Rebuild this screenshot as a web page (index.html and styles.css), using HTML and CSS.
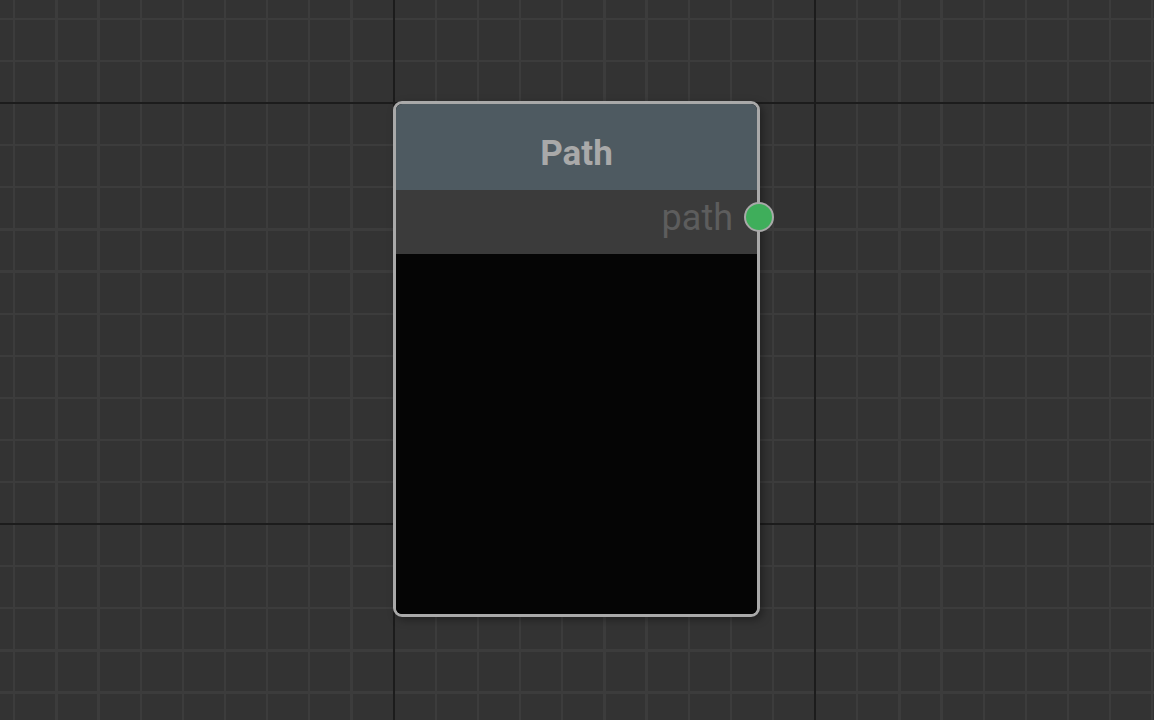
FILE: index.html
```html
<!DOCTYPE html>
<html lang="en">
<head>
<meta charset="utf-8">
<title>Path node</title>
<link rel="stylesheet" href="styles.css">
</head>
<body>
<div class="canvas">
  <div class="node">
    <div class="node-header">
      <span class="node-title">Path</span>
    </div>
    <div class="node-row">
      <span class="port-label">path</span>
      <span class="port"></span>
    </div>
    <div class="node-body"></div>
  </div>
</div>
</body>
</html>
```

FILE: styles.css
```css
html, body {
  margin: 0;
  padding: 0;
  width: 1154px;
  height: 720px;
  overflow: hidden;
  background: #333333;
}

.canvas {
  position: relative;
  width: 1154px;
  height: 720px;
  font-family: Roboto, "Noto Sans", "Liberation Sans", sans-serif;
  background-color: #333333;
  background-image:
    linear-gradient(90deg, transparent 0 393px, #1c1c1c 393px 395px, transparent 395px 814px, #1c1c1c 814px 816px, transparent 816px),
    linear-gradient(180deg, transparent 0 102px, #1c1c1c 102px 104px, transparent 104px 523px, #1c1c1c 523px 525px, transparent 525px),
    repeating-linear-gradient(90deg, #3c3c3c 13.15px, #3c3c3c 15.4px, transparent 15.4px, transparent 55.3px),
    repeating-linear-gradient(180deg, #3c3c3c 17.8px, #3c3c3c 20px, transparent 20px, transparent 59.9px);
}

.node {
  position: absolute;
  left: 393px;
  top: 101px;
  width: 367px;
  height: 516px;
  box-sizing: border-box;
  border: 3px solid #a9a9a9;
  border-radius: 9px;
  display: flex;
  flex-direction: column;
  box-shadow: 3px 3px 8px rgba(0, 0, 0, 0.35);
  background: #050505;
}

.node-header {
  height: 86px;
  flex: none;
  box-sizing: border-box;
  padding-top: 12px;
  background: #4e5a61;
  border-radius: 6px 6px 0 0;
  display: flex;
  align-items: center;
  justify-content: center;
}

.node-title {
  font-size: 35px;
  font-weight: 700;
  color: #a9a9a9;
  line-height: 1;
}

.node-row {
  position: relative;
  height: 64px;
  flex: none;
  box-sizing: border-box;
  background: #3b3b3b;
  display: flex;
  align-items: center;
  justify-content: flex-end;
  padding-right: 24px;
  padding-bottom: 8px;
}

.port-label {
  font-size: 36px;
  color: #5d5d5d;
  line-height: 1;
}

.port {
  position: absolute;
  right: -17px;
  top: 12px;
  width: 26px;
  height: 26px;
  border-radius: 50%;
  background: #3fae5b;
  border: 2px solid #a9a9a9;
}

.node-body {
  flex: 1;
  background: #050505;
  border-radius: 0 0 6px 6px;
}
```
